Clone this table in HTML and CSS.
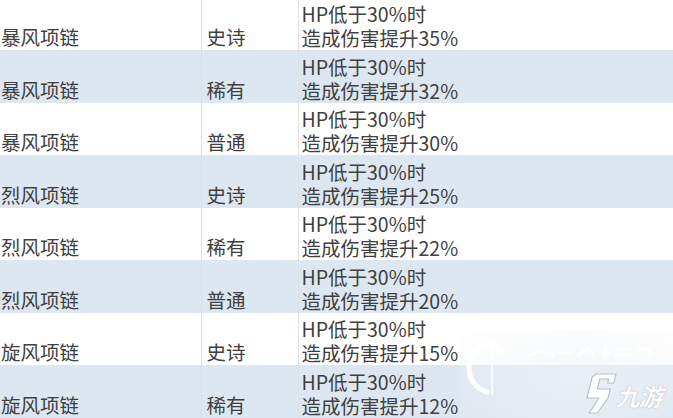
FILE: index.html
```html
<!DOCTYPE html>
<html lang="zh">
<head>
<meta charset="utf-8">
<link rel="stylesheet" href="styles.css">
</head>
<body>
<div class="page">
<table class="gear">
  <colgroup><col class="c1"><col class="c2"><col class="c3"></colgroup>
  <tbody>
    <tr class="first"><td>暴风项链</td><td>史诗</td><td>HP低于30%时<br>造成伤害提升35%</td></tr>
    <tr class="alt"><td>暴风项链</td><td>稀有</td><td>HP低于30%时<br>造成伤害提升32%</td></tr>
    <tr><td>暴风项链</td><td>普通</td><td>HP低于30%时<br>造成伤害提升30%</td></tr>
    <tr class="alt"><td>烈风项链</td><td>史诗</td><td>HP低于30%时<br>造成伤害提升25%</td></tr>
    <tr><td>烈风项链</td><td>稀有</td><td>HP低于30%时<br>造成伤害提升22%</td></tr>
    <tr class="alt"><td>烈风项链</td><td>普通</td><td>HP低于30%时<br>造成伤害提升20%</td></tr>
    <tr><td>旋风项链</td><td>史诗</td><td>HP低于30%时<br>造成伤害提升15%</td></tr>
    <tr class="alt"><td>旋风项链</td><td>稀有</td><td>HP低于30%时<br>造成伤害提升12%</td></tr>
  </tbody>
</table>
<div class="watermark">
  <svg class="wm-svg" width="213" height="88" viewBox="0 0 213 88">
    <path d="M35 13 A25 25 0 0 0 27 62" fill="none" stroke="rgba(255,255,255,0.97)" stroke-width="5" stroke-linecap="round"/>
    <path d="M36 14 L45 22 L40 24 Z" fill="rgba(255,255,255,0.97)" stroke="rgba(255,255,255,0.97)" stroke-width="2" stroke-linejoin="round"/>
    <line x1="32" y1="15" x2="32" y2="65" stroke="rgba(255,255,255,0.95)" stroke-width="1.5"/>
    <g stroke="rgba(255,255,255,0.85)" stroke-width="3" stroke-linecap="round" fill="none">
      <path d="M68 26 L80 21 L94 25"/>
      <path d="M100 23 L112 23"/>
      <path d="M118 25 L128 19 L134 25"/>
      <path d="M140 23 L150 23 M145 17 L145 27"/>
      <path d="M156 19 L170 19 M156 25 L172 25"/>
      <path d="M178 19 L190 19 L190 27"/>
    </g>
    <g transform="translate(128 44) skewX(-14)">
      <path d="M8 0 H28 L28 9 H22 L22 5 H13 L13 15 H26 L26 24 L19 39 H11 L17 24 H5 V3 Z" fill="rgba(255,255,255,0.97)" stroke="#b9c0c8" stroke-width="1.2" stroke-linejoin="round"/>
    </g>
  </svg>
  <span class="wm-brand">九游</span>
</div>
</div>
</body>
</html>
```
FILE: styles.css
```css
html, body {
  margin: 0;
  padding: 0;
  background: #ffffff;
}
.page {
  position: relative;
  width: 673px;
  height: 418px;
  overflow: hidden;
}
.gear {
  border-collapse: collapse;
  table-layout: fixed;
  width: 673px;
  font-family: "Noto Sans CJK SC", "Noto Sans", sans-serif;
  font-size: 19.5px;
  color: #404040;
}
.c1 { width: 201px; }
.c2 { width: 97px; }
.c3 { width: 375px; }
.gear tr { height: 52.5px; }
.gear tr.first { height: 50px; }
.gear tr.alt { background: #dde7f1; }
.gear td {
  vertical-align: bottom;
  line-height: 24px;
  padding: 0 0 0 3px;
  white-space: nowrap;
}
.gear td:first-child { padding-left: 1px; padding-bottom: 1px; }
.gear td:nth-child(2) { border-left: 1px solid #e1e1e1; padding-left: 5px; padding-bottom: 1px; }
.gear td:nth-child(3) { border-left: 1px solid #e1e1e1; }
.gear tr.alt td:nth-child(2),
.gear tr.alt td:nth-child(3) { border-left-color: #d6e0ea; }
.watermark {
  position: absolute;
  right: 0;
  bottom: 0;
  width: 213px;
  height: 88px;
  background: radial-gradient(ellipse 80% 85% at 55% 55%, rgba(240,243,246,0.7), rgba(255,255,255,0) 100%);
}
.wm-svg { position: absolute; left: 0; top: 0; }
.wm-brand {
  position: absolute;
  left: 158px;
  top: 51px;
  font-family: "Noto Sans CJK SC", sans-serif;
  font-size: 24px;
  font-weight: 700;
  line-height: 30px;
  color: rgba(255,255,255,0.97);
  transform: skewX(-14deg);
  text-shadow: 0 0 1px #b3bac3, 0 0 1px #b3bac3;
  letter-spacing: -1px;
}
```
